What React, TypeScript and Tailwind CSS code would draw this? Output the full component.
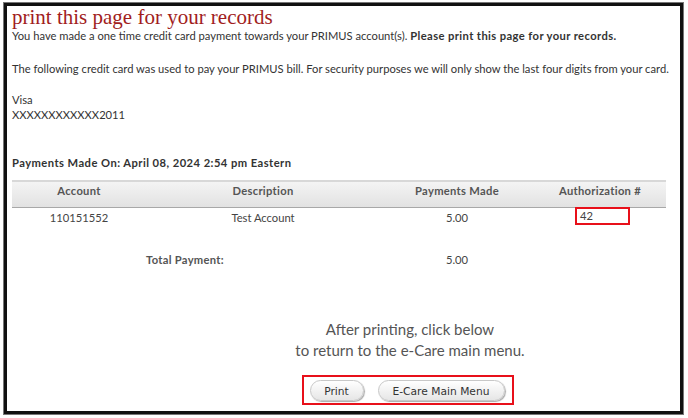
const rows = [
  { account: "110151552", description: "Test Account", amount: "5.00", auth: "42" },
];

export default function App() {
  return (
    <div className="w-[688px] h-[418px] bg-white pl-[4px] pt-[3px] font-['Lato','Noto_Sans',sans-serif] text-[11.2px] leading-[15px] text-[#333]">
      <div className="w-[679px] h-[411px] border-[3px] border-[#111] shadow-[0_0_0_1px_#777] pl-[5px] pr-[13px]">
        <h1 className="font-['Liberation_Serif',serif] text-[21px] leading-[22px] text-[#a11d1d]">
          print this page for your records
        </h1>
        <p className="whitespace-nowrap">
          You have made a one time credit card payment towards your PRIMUS account(s).{" "}
          <b className="tracking-[0.4px]">Please print this page for your records.</b>
        </p>
        <p className="mt-[17.5px] whitespace-nowrap">
          The following credit card was used to pay your PRIMUS bill. For security purposes we will only show the last four digits from your card.
        </p>
        <div className="mt-[16px]">
          <div>Visa</div>
          <div>XXXXXXXXXXXX2011</div>
        </div>
        <div className="mt-[33px] font-bold tracking-[0.45px]">Payments Made On: April 08, 2024 2:54 pm Eastern</div>

        <div className="mt-[10px] w-[654px]">
          <div className="grid grid-cols-[134px_234px_154px_1fr] h-[28px] pt-[1px] border-t-2 border-[#d8d8d8] border-b border-b-[#a8a8a8] bg-gradient-to-b from-[#f4f4f4] to-[#e2e2e2] font-bold tracking-[0.3px] text-[#555]">
            <div className="text-center">Account</div>
            <div className="text-center">Description</div>
            <div className="text-center">Payments Made</div>
            <div className="text-center">Authorization #</div>
          </div>
          {rows.map((r) => (
            <div key={r.account} className="grid grid-cols-[134px_234px_154px_1fr] h-[20px] pt-[2px] text-[#444]">
              <div className="text-center">{r.account}</div>
              <div className="text-center">{r.description}</div>
              <div className="text-center">{r.amount}</div>
              <div className="flex">
                <div className="ml-[41px] -mt-[3px] w-[55px] h-[18px] border-2 border-[#e8101a] pl-[3px] leading-[14px]">
                  {r.auth}
                </div>
              </div>
            </div>
          ))}
          <div className="grid grid-cols-[134px_234px_154px_1fr] mt-[24px] h-[20px] text-[#444]">
            <div className="col-span-2 text-center pr-[22px] font-bold tracking-[0.3px] text-[#555]">Total Payment:</div>
            <div className="text-center">5.00</div>
            <div />
          </div>
        </div>

        <div className="mt-[47px] flex flex-col items-center pl-[141px] text-[15px] leading-[21px] text-[#555]">
          <div>After printing, click below</div>
          <div>to return to the e-Care main menu.</div>
          <div className="mt-[14px] -ml-[5px] w-[212px] h-[30px] border-2 border-[#e8101a] flex items-center gap-[14px] pl-[6px] font-['DejaVu_Sans',sans-serif] text-[10.7px] text-[#333]">
            <button className="h-[21px] w-[54px] rounded-full border border-[#c8c8c8] bg-gradient-to-b from-white to-[#e6e6e6] shadow-[1px_1px_1px_#aaa] mt-[2px]">
              Print
            </button>
            <button className="h-[21px] w-[127px] rounded-full border border-[#c8c8c8] bg-gradient-to-b from-white to-[#e6e6e6] shadow-[1px_1px_1px_#aaa] mt-[2px]">
              E-Care Main Menu
            </button>
          </div>
        </div>
      </div>
    </div>
  );
}
